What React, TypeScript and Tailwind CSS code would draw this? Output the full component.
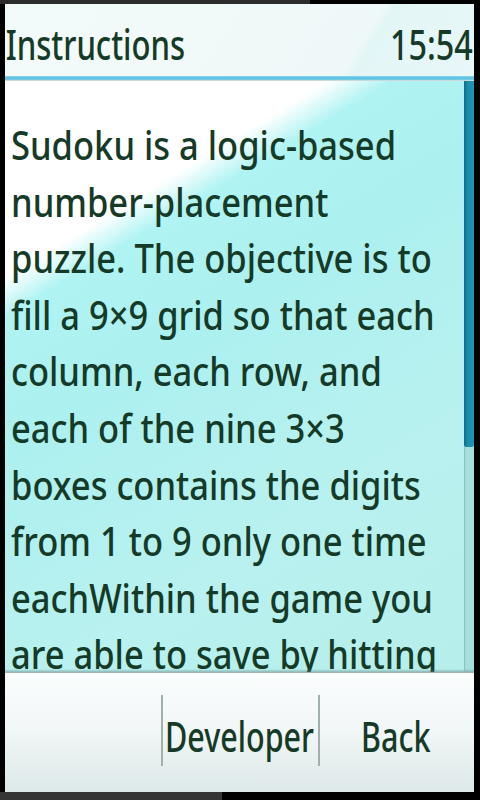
import React from "react";

const lines = [
  "Sudoku is a logic-based",
  "number-placement",
  "puzzle. The objective is to",
  "fill a 9×9 grid so that each",
  "column, each row, and",
  "each of the nine 3×3",
  "boxes contains the digits",
  "from 1 to 9 only one time",
  "eachWithin the game you",
  "are able to save by hitting",
];

export default function App() {
  return (
    <div
      className="w-[480px] h-[800px] bg-black flex flex-col overflow-hidden text-[#153a27]"
      style={{ fontFamily: '"Noto Sans", "Open Sans", sans-serif' }}
    >
      {/* top strip */}
      <div className="h-[4px] flex shrink-0">
        <div className="w-[310px] bg-[#2c2c2c]" />
        <div className="flex-1 bg-black" />
      </div>

      <div className="flex-1 flex pl-[5px] pr-[6px] min-h-0">
        <div className="flex-1 flex flex-col min-w-0">
          {/* title bar */}
          <div className="h-[72px] shrink-0 flex justify-between bg-[linear-gradient(122deg,#f3fafa_0%,#eff8f8_74%,#e3f6f6_76%,#e8f7f7_100%)]">
            <div className="pt-[8px] pl-[1px] leading-[64px] text-[42px] font-medium whitespace-nowrap origin-left scale-x-[0.74]">
              Instructions
            </div>
            <div className="pt-[8px] pr-[1px] leading-[64px] text-[42px] font-medium whitespace-nowrap origin-right scale-x-[0.77]">
              15:54
            </div>
          </div>
          {/* blue line */}
          <div className="h-[4px] shrink-0 bg-[linear-gradient(180deg,#8fd6ee_0%,#55bfe2_50%,#7fcde6_100%)]" />

          {/* content */}
          <div className="h-[592px] shrink-0 flex relative bg-[linear-gradient(148.6deg,#ffffff_0%,#ffffff_22.5%,#b0f3f3_27%,#acf0f0_40%,#b8f1ef_70%,#b6eeeb_100%)] border-t border-[#c9dada]">
            <div className="flex-1 min-w-0 overflow-hidden pt-[36px] pl-[6px]">
              {lines.map((l, i) => (
                <div
                  key={i}
                  className="text-[39px] leading-[56.6px] font-medium whitespace-nowrap origin-left scale-x-[0.885]"
                >
                  {l}
                </div>
              ))}
            </div>
            {/* scrollbar */}
            <div className="w-[10px] shrink-0 flex flex-col">
              <div className="h-[366px] bg-[linear-gradient(90deg,#0e6c8a_0%,#1b8bab_35%,#1f94b4_100%)] rounded-b-[2px]" />
              <div className="flex-1 bg-[#a6e0de] border-l border-[#86c3c3] rounded-b-[3px]" />
            </div>
            <div className="absolute left-0 right-0 bottom-0 h-[3px] bg-[linear-gradient(180deg,rgba(120,150,150,0)_0%,rgba(100,130,130,0.5)_100%)]" />
          </div>

          {/* softkeys */}
          <div className="flex-1 grid grid-cols-3 bg-[linear-gradient(180deg,#fbfdfd_0%,#f1f6f6_50%,#dde8e8_100%)] border-t border-[#9fb2b2]">
            <div />
            <div className="flex items-center justify-center relative">
              <div className="absolute left-0 top-[22px] bottom-[26px] w-[2px] bg-[#a2b0ac]" />
              <div className="pt-[4px] text-[30.5px] leading-[42px] font-medium whitespace-nowrap scale-y-[1.37]">
                Developer
              </div>
            </div>
            <div className="flex items-center justify-center relative">
              <div className="absolute left-0 top-[22px] bottom-[26px] w-[2px] bg-[#a2b0ac]" />
              <div className="pt-[4px] text-[30.5px] leading-[42px] font-medium whitespace-nowrap scale-y-[1.37]">
                Back
              </div>
            </div>
          </div>
        </div>
      </div>

      {/* bottom strip */}
      <div className="h-[8px] flex shrink-0">
        <div className="w-[222px] bg-[#353535]" />
        <div className="flex-1 bg-black" />
      </div>
    </div>
  );
}
